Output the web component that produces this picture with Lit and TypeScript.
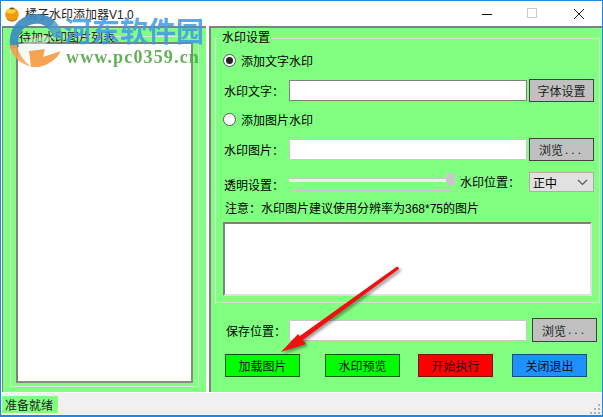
import { LitElement, html, css, svg } from "lit";
import { customElement } from "lit/decorators.js";

@customElement("app-root")
export class AppRoot extends LitElement {
  static styles = css`
    :host { display: block; width: 603px; height: 417px; }
    * { box-sizing: border-box; }
    .win { position: relative; width: 603px; height: 417px; overflow: hidden; background: #f0f0f0;
      border: 1px solid #1e88e5; border-bottom-width: 2px;
      font: 12px "Liberation Sans", "Noto Sans CJK SC", sans-serif; color: #000; display: flex; flex-direction: column; }
    .title { height: 25px; flex: none; background: #fff; display: flex; align-items: center; padding-left: 3px; }
    .logo { width: 16px; height: 16px; flex: none; }
    .ttl { margin-left: 5px; color: #222; }
    .sp { flex: 1; }
    .wc { width: 46px; height: 25px; display: flex; align-items: center; justify-content: center; }
    .body { height: 366px; flex: none; background: #fff; display: flex; }
    .left { width: 204px; flex: none; background: #80ff80; border-left: 1px solid #808080; border-top: 2px solid #808080; padding: 8px 6px 5px 7px; margin-right: 3px; margin-left: 1px; }
    .lgroup { height: 100%; border: 1px solid #d8e8d8; padding: 5px 5px 3px 5px; width: 189px; }
    .list { height: 100%; background: #fff; border: 2px solid #808080; border-color: #808080 #8a8a8a #8a8a8a #808080; }
    .right { flex: 1; background: #80ff80; border-left: 2px solid #808080; border-top: 2px solid #808080; padding: 10px 4px 0 4px; margin-right: 1px; }
    .group { position: relative; height: 265px; border: 1px solid #d4e4d4; padding: 11px 5px 0 8px; }
    .legend { position: absolute; left: 5px; top: -8px; background: #80ff80; padding: 0 1px; line-height: 15px; }
    .radio { display: flex; align-items: center; gap: 5px; height: 20px; margin-left: -1px; }
    .radio2 { margin-top: 7px; }
    .dot { width: 13px; height: 13px; border-radius: 50%; background: #fff; border: 1px solid #555; display: flex; align-items: center; justify-content: center; flex: none; }
    .dot i { width: 7px; height: 7px; border-radius: 50%; background: #222; display: block; }
    .row { display: flex; align-items: center; height: 23px; }
    .lab { width: 65px; flex: none; white-space: nowrap; }
    .input { width: 238px; height: 21px; background: #fff; border: 1px solid #c8c8c8; flex: none; }
    .input.dark { border-color: #808080; }
    .btn { width: 65px; height: 23px; margin-left: 2px; background: #c0c0c0; border: 1px solid #404040; flex: none; display: flex; align-items: center; justify-content: center; color: #222; }
    .dots { letter-spacing: 3px; margin-left: 2px; }
    .r1 { margin-top: 9px; }
    .r2 { margin-top: 9px; }
    .r3 { margin-top: 12px; }
    .slider { width: 171px; flex: none; height: 23px; position: relative; }
    .track { position: absolute; left: 0; right: 5px; top: 5px; height: 4px; background: #e8f0e8; border-top: 1px solid #c8c8c8; }
    .thumb { position: absolute; right: 5px; top: 0; width: 9px; height: 13px; background: #c8c8c8; border-radius: 1px 1px 4px 4px; }
    .tick { position: absolute; left: 4px; right: 9px; top: 16px; height: 3px; background: #c8c8c8; }
    .pos { width: 69px; flex: none; white-space: nowrap; margin-top: -6px; }
    .select { width: 65px; height: 20px; margin-top: -5px; background: #e1e1e1; border: 1px solid #adadad; flex: none; display: flex; align-items: center; justify-content: space-between; padding: 0 5px 0 3px; }
    .note { margin-top: 5px; height: 17px; line-height: 17px; margin-left: 1px; white-space: nowrap; }
    .area { margin-top: 4px; width: 369px; height: 74px; margin-left: -1px; background: #fff; border: 2px solid #808080; border-color: #808080 #e0e0e0 #e0e0e0 #808080; }
    .save { display: flex; align-items: center; height: 24px; margin-top: 15px; padding-left: 11px; }
    .save .lab { width: 63px; }
    .save .btn { margin-left: 5px; height: 24px; }
    .acts { display: flex; margin-top: 12px; padding-left: 10px; }
    .act { width: 75px; height: 23px; border: 1px solid #0a5c0a; display: flex; align-items: center; justify-content: center; flex: none; color: #111; }
    .g { background: #00ff00; }
    .r { background: #ff0000; border-color: #7a1010; }
    .b { background: #1e90ff; border-color: #144a80; }
    .m1 { margin-left: 25px; } .m2 { margin-left: 18px; } .m3 { margin-left: 19px; }
    .status { flex: 1; background: #f0f0f0; border-top: 1px solid #fff; display: flex; align-items: center; position: relative; padding-left: 1px; }
    .ready { width: 56px; height: 17px; background: #80ff80; display: flex; align-items: center; padding-left: 3px; color: #222; }
    .grip { position: absolute; right: 1px; bottom: 0; }
    .overlay { position: absolute; left: 0; top: 0; pointer-events: none; }
    .arrow { filter: drop-shadow(2px 2px 1.5px rgba(0,0,0,.4)); }
    .wm1 { position: absolute; left: 63px; top: 11px; font: bold 28px "Noto Sans CJK SC", sans-serif; color: #3f9be8; opacity: .85; line-height: 36px; white-space: nowrap; }
    .wm2 { position: absolute; left: 65px; top: 46px; font: bold 18px "Liberation Serif", serif; color: #55a84a; opacity: .9; letter-spacing: 1.15px; white-space: nowrap; }
    .legend2 { position: absolute; left: 18px; top: 29px; line-height: 16px; color: #222; }
  `;

  render() {
    return html`<div class="win">
      <div class="title">
        <svg class="logo" viewBox="0 0 16 16"><circle cx="8" cy="8.5" r="6.8" fill="#f09a10"/><ellipse cx="7" cy="5" rx="4.5" ry="2.6" fill="#ffd040"/><path d="M3 13a7 7 0 0 0 10 0" fill="none" stroke="#a86a10"/><ellipse cx="8" cy="2.5" rx="2.5" ry="1" fill="#5a6a20"/></svg>
        <span class="ttl">橘子水印添加器V1.0</span>
        <span class="sp"></span>
        <span class="wc"><svg width="12" height="12"><path d="M1 6.5h10" stroke="#111" stroke-width="1"/></svg></span>
        <span class="wc"><svg width="12" height="12"><rect x=".5" y=".5" width="9" height="9" fill="none" stroke="#c8c8c8"/></svg></span>
        <span class="wc"><svg width="12" height="12"><path d="M1 1l10 10M11 1L1 11" stroke="#222" stroke-width="1"/></svg></span>
      </div>
      <div class="body">
        <div class="left">
          <div class="lgroup"><div class="list"></div></div>
        </div>
        <div class="right">
          <div class="group">
            <div class="legend">水印设置</div>
            <div class="radio"><span class="dot"><i></i></span>添加文字水印</div>
            <div class="row r1"><span class="lab">水印文字：</span><span class="input dark"></span><span class="btn">字体设置</span></div>
            <div class="radio radio2"><span class="dot"></span>添加图片水印</div>
            <div class="row r2"><span class="lab">水印图片：</span><span class="input"></span><span class="btn">浏览<span class="dots">...</span></span></div>
            <div class="row r3">
              <span class="lab">透明设置：</span>
              <span class="slider"><i class="track"></i><i class="thumb"></i><i class="tick"></i></span>
              <span class="pos">水印位置：</span>
              <span class="select">正中<svg width="11" height="7"><path d="M1 1l4.5 4.5L10 1" fill="none" stroke="#555" stroke-width="1.2"/></svg></span>
            </div>
            <div class="note">注意：水印图片建议使用分辨率为368*75的图片</div>
            <div class="area"></div>
          </div>
          <div class="save"><span class="lab">保存位置：</span><span class="input"></span><span class="btn">浏览<span class="dots">...</span></span></div>
          <div class="acts">
            <span class="act g">加载图片</span>
            <span class="act g m1">水印预览</span>
            <span class="act r m2">开始执行</span>
            <span class="act b m3">关闭退出</span>
          </div>
        </div>
      </div>
      <div class="status"><span class="ready">准备就绪</span>
        <svg class="grip" width="12" height="12" fill="#b0b0b0"><rect x="9" y="1" width="2" height="2"/><rect x="5" y="5" width="2" height="2"/><rect x="9" y="5" width="2" height="2"/><rect x="1" y="9" width="2" height="2"/><rect x="5" y="9" width="2" height="2"/><rect x="9" y="9" width="2" height="2"/></svg>
      </div>

      <div class="legend2">待加水印图片列表</div>
      <svg class="overlay" width="603" height="417">
        ${svg`
        <path d="M10 48 A27 27 0 0 1 54 20 L48 28 A18 18 0 0 0 18 46Z" fill="#3a88c0" opacity=".9"/>
        <path d="M54 20 A27 27 0 0 1 62 38 L52 36 A18 18 0 0 0 46 27Z" fill="#4a9ad0" opacity=".8"/>
        <path d="M18 46 Q30 34 52 36 Q40 50 22 54Z" fill="#e8f6ee" opacity=".5"/>
        <path d="M8 44 Q12 60 28 65 L30 66 Q18 56 16 44Z" fill="#f5a050" opacity=".85"/>
        <path d="M28 50 L44 48 L42 56 L60 50 Q54 62 38 66 L30 66Z" fill="#f59a40" opacity=".9"/>
        <g class="arrow">
          <path d="M396 265.5 Q398 266 398 268 L299 341 L296 337Z" fill="#f01010"/>
          <path d="M280 351 L297 333 L305 343Z" fill="#f01010"/>
        </g>
        `}
      </svg>
      <div class="wm1">河东软件园</div>
      <div class="wm2">www.pc0359.cn</div>
    </div>`;
  }
}
